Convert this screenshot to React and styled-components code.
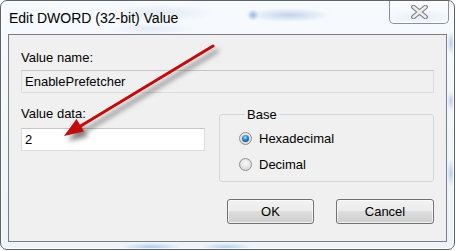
import styled, { createGlobalStyle } from "styled-components";

const Global = createGlobalStyle`
  html, body {
    margin: 0;
    padding: 0;
    background: #ffffff;
    width: 456px;
    height: 251px;
    overflow: hidden;
  }
  * { box-sizing: border-box; }
`;

const Window = styled.div`
  position: relative;
  width: 455px;
  height: 250px;
  border: 1px solid #5e6268;
  border-radius: 7px;
  box-shadow: inset 0 0 0 1px rgba(255, 255, 255, 0.75);
  background:
    radial-gradient(ellipse 42px 7px at 288px 14px, rgba(130, 165, 215, 0.45), transparent),
    radial-gradient(ellipse 6px 6px at 252px 14px, rgba(80, 130, 215, 0.55), transparent),
    radial-gradient(ellipse 55px 9px at 160px 12px, rgba(190, 205, 230, 0.35), transparent),
    radial-gradient(ellipse 45px 6px at 150px 28px, rgba(190, 205, 230, 0.3), transparent),
    radial-gradient(ellipse 30px 7px at 420px 15px, rgba(170, 195, 230, 0.35), transparent),
    radial-gradient(ellipse 4px 12px at 450px 42px, rgba(120, 160, 210, 0.5), transparent),
    radial-gradient(ellipse 4px 10px at 450px 100px, rgba(120, 160, 210, 0.45), transparent),
    radial-gradient(ellipse 4px 14px at 450px 172px, rgba(120, 160, 210, 0.45), transparent),
    radial-gradient(ellipse 30px 4px at 150px 246px, rgba(110, 165, 230, 0.5), transparent),
    radial-gradient(ellipse 25px 4px at 225px 246px, rgba(110, 165, 230, 0.45), transparent),
    linear-gradient(#f7fafd, #edf3f9);
  font-family: "Liberation Sans", Arial, sans-serif;
  color: #000;
  overflow: hidden;
`;

const TitleBar = styled.div`
  height: 33px;
  display: flex;
  justify-content: space-between;
  align-items: flex-start;
  padding: 0 5px 0 8px;
`;

const Title = styled.span`
  margin-top: 9px;
  font-size: 14px;
  line-height: 17px;
  color: #000;
`;

const CloseButton = styled.div`
  width: 60px;
  height: 23px;
  display: flex;
  align-items: center;
  justify-content: center;
  border: 1px solid #8d9196;
  border-top: none;
  border-radius: 0 0 5px 5px;
  background: linear-gradient(rgba(255, 255, 255, 0.55), rgba(235, 240, 246, 0.4));
  box-shadow: inset 0 -1px 0 rgba(255, 255, 255, 0.8);
`;

const Client = styled.div`
  margin: 0 7px;
  width: 439px;
  height: 208px;
  border: 1px solid #7b7e82;
  background: #f0f0f0;
  padding: 15px 12px 0 12px;
  font-size: 13px;
  line-height: 15px;
`;

const Grid = styled.div`
  display: grid;
  grid-template-columns: 184px 215px;
  column-gap: 14px;
  row-gap: 13px;
`;

const Field = styled.div`
  display: flex;
  flex-direction: column;
  grid-column: ${(p) => (p.wide ? "1 / span 2" : "auto")};
`;

const Label = styled.label`
  margin-bottom: ${(p) => p.gap}px;
`;

const TextBox = styled.div`
  height: 23px;
  border: 1px solid #dcdcdc;
  border-top-color: #c6c6c6;
  background: ${(p) => (p.readOnly ? "#f0f0f0" : "#ffffff")};
  padding: 0 3px;
  display: flex;
  align-items: center;
`;

const Group = styled.fieldset`
  margin: 1px 0 0 0;
  padding: 9px 0 9px 19px;
  border: 1px solid #d0d8de;
  border-radius: 3px;
  display: flex;
  flex-direction: column;
  gap: 11px;
  min-width: 0;
`;

const Legend = styled.legend`
  margin-left: 6px;
  padding: 0 2px;
  font-size: 13px;
  line-height: 15px;
`;

const RadioRow = styled.div`
  display: flex;
  align-items: center;
  gap: 7px;
`;

const Radio = styled.span`
  width: 13px;
  height: 13px;
  border-radius: 50%;
  border: 1px solid #8e8f8f;
  background: radial-gradient(circle at 50% 40%, #fbfbfb 0%, #e6e6e6 45%, #cfcfcf 100%);
  display: flex;
  align-items: center;
  justify-content: center;
  &::after {
    content: "";
    display: ${(p) => (p.checked ? "block" : "none")};
    width: 7px;
    height: 7px;
    border-radius: 50%;
    background: radial-gradient(circle at 45% 35%, #a7e0fb 0%, #2c8bd1 40%, #16507f 75%, #0f2f4c 100%);
  }
`;

const Buttons = styled.div`
  display: flex;
  justify-content: flex-end;
  gap: 22px;
  margin-top: 17px;
`;

const Button = styled.div`
  width: ${(p) => p.w}px;
  height: 25px;
  border: 1px solid #707070;
  border-radius: 3px;
  background: linear-gradient(#f2f2f2 0%, #ebebeb 49%, #dddddd 50%, #cfcfcf 100%);
  box-shadow: inset 0 0 0 1px rgba(255, 255, 255, 0.7);
  display: flex;
  align-items: center;
  justify-content: center;
`;

const Arrow = styled.svg`
  position: absolute;
  left: -1px;
  top: -1px;
  width: 456px;
  height: 251px;
  pointer-events: none;
  filter: drop-shadow(4px 5px 2.5px rgba(0, 0, 0, 0.5));
`;

export default function App() {
  return (
    <>
      <Global />
      <Window>
        <TitleBar>
          <Title>Edit DWORD (32-bit) Value</Title>
          <CloseButton>
            <svg width="17" height="14" viewBox="0 0 17 14">
              <path d="M2.5 2 L14.5 12 M14.5 2 L2.5 12" stroke="#7a7d82" strokeWidth="4.8" strokeLinecap="round" />
              <path d="M2.5 2 L14.5 12 M14.5 2 L2.5 12" stroke="#eeeeee" strokeWidth="2.6" strokeLinecap="round" />
            </svg>
          </CloseButton>
        </TitleBar>
        <Client>
          <Grid>
            <Field wide>
              <Label gap={5}>Value name:</Label>
              <TextBox readOnly>EnablePrefetcher</TextBox>
            </Field>
            <Field>
              <Label gap={7}>Value data:</Label>
              <TextBox>2</TextBox>
            </Field>
            <Group>
              <Legend>Base</Legend>
              <RadioRow>
                <Radio checked />
                <span>Hexadecimal</span>
              </RadioRow>
              <RadioRow>
                <Radio />
                <span>Decimal</span>
              </RadioRow>
            </Group>
          </Grid>
          <Buttons>
            <Button w={87}>OK</Button>
            <Button w={98}>Cancel</Button>
          </Buttons>
        </Client>
        <Arrow viewBox="0 0 456 251">
          <line x1="213" y1="46" x2="79" y2="127" stroke="#c40a0a" strokeWidth="3" strokeLinecap="round" />
          <polygon points="64,136 76.5,119 84,131.5" fill="#c40a0a" />
        </Arrow>
      </Window>
    </>
  );
}
